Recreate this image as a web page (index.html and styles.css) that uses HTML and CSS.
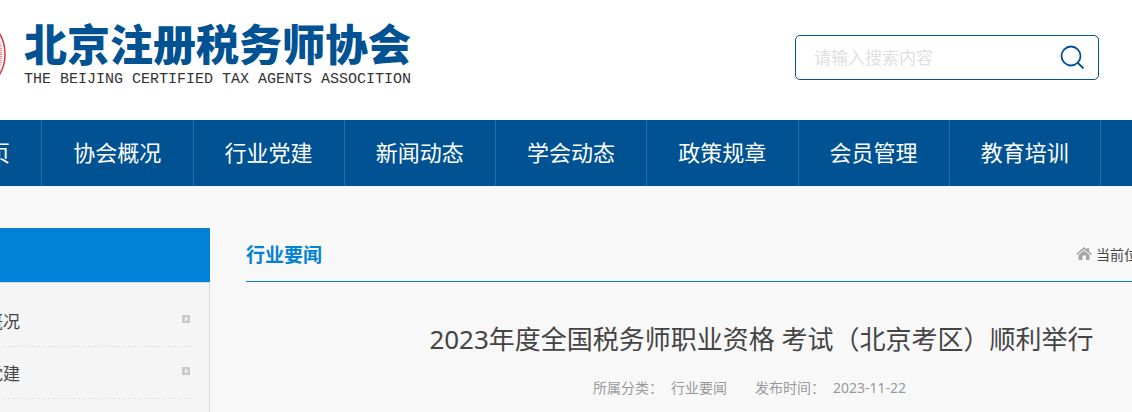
FILE: index.html
```html
<!DOCTYPE html>
<html lang="zh-CN">
<head>
  <meta charset="UTF-8" />
  <title>北京注册税务师协会</title>
  <link rel="stylesheet" href="styles.css">
</head>
<body>
  <header class="header">
    <a class="logo" href="#">
      <svg class="seal" width="84" height="84" viewBox="0 0 84 84" fill="none" stroke="#e0303a">
        <circle cx="42" cy="42" r="41" stroke-width="1.5" />
        <circle cx="42" cy="42" r="36" stroke-width="5" stroke-dasharray="1 1" opacity=".6" />
        <circle cx="42" cy="42" r="30" />
      </svg>
      <span class="logo-text">
        <span class="logo-cn">北京注册税务师协会</span>
        <span class="logo-en">THE BEIJING CERTIFIED TAX AGENTS ASSOCITION</span>
      </span>
    </a>
    <form class="search">
      <input type="text" placeholder="请输入搜索内容" aria-label="搜索">
      <button type="button" aria-label="搜索">
        <svg width="26" height="26" viewBox="0 0 26 26" fill="none" stroke="#005293" stroke-width="1.8">
          <circle cx="12" cy="12" r="9.5" />
          <path d="M18.500 18.500l6 6" />
        </svg>
      </button>
    </form>
  </header>

  <nav>
    <ul>
      <li><a href="#">网站首页</a></li>
      <li><a href="#">协会概况</a></li>
      <li><a href="#">行业党建</a></li>
      <li><a href="#">新闻动态</a></li>
      <li><a href="#">学会动态</a></li>
      <li><a href="#">政策规章</a></li>
      <li><a href="#">会员管理</a></li>
      <li><a href="#">教育培训</a></li>
    </ul>
  </nav>

  <div class="content">
    <aside class="sidebar">
      <div class="sidebar-head"></div>
      <ul>
        <li>
          <a href="#">协会概况</a>
          <svg width="8" height="8" viewBox="0 0 8 8"><path fill="#c9c9c9" d="M0 0h8v8H0z" /><path fill="#f5f5f5" d="M3 2h1l2 2-2 2H3z" /></svg>
        </li>
        <li>
          <a href="#">行业党建</a>
          <svg width="8" height="8" viewBox="0 0 8 8"><path fill="#c9c9c9" d="M0 0h8v8H0z" /><path fill="#f5f5f5" d="M3 2h1l2 2-2 2H3z" /></svg>
        </li>
      </ul>
    </aside>

    <main>
      <div class="main-head">
        <h2>行业要闻</h2>
        <div class="crumb">
          <svg width="16" height="14" viewBox="0 0 16 14" fill="#a5a5a5">
            <path d="M8 0l3 2.500V1h2v3.300L16 7l-1 1-7-5.800L1 8 0 7z" />
            <path d="M8 3.500l5.500 4.500V13H10V8.500H6.500V13H2.500V8z" />
          </svg>
          <span>当前位置：首页 &gt; 行业要闻</span>
        </div>
      </div>
      <article>
        <h1>2023年度全国税务师职业资格 考试（北京考区）顺利举行</h1>
        <div class="meta">
          <div><span>所属分类：</span><span>行业要闻</span></div>
          <div><span>发布时间：</span><span>2023-11-22</span></div>
        </div>
      </article>
    </main>
  </div>
</body>
</html>
```

FILE: styles.css
```css
* {
  box-sizing: border-box;
}

body {
  margin: 0;
  background: #f8f8f8;
  color: #444;
  font-family: "Noto Sans", "Noto Sans CJK SC", sans-serif;
  overflow: hidden;
}

a {
  color: inherit;
  text-decoration: none;
}

ul {
  list-style: none;
  margin: 0;
  padding: 0;
}

.header {
  display: flex;
  justify-content: space-between;
  align-items: center;
  height: 120px;
  padding-right: 33px;
  background: #fff;
}

.logo {
  display: flex;
  align-items: center;
  gap: 18px;
  margin-left: -78px;
  padding-bottom: 12px;
}

.seal {
  flex: none;
}

.logo-text {
  display: flex;
  flex-direction: column;
  gap: 4px;
}

.logo-cn {
  color: #005293;
  font-family: "Noto Sans CJK SC", sans-serif;
  font-size: 43px;
  font-weight: 900;
  line-height: 48px;
}

.logo-en {
  color: #333;
  font-family: "Liberation Mono", monospace;
  font-size: 15px;
  line-height: 20px;
}

.search {
  display: flex;
  align-items: center;
  width: 304px;
  height: 45px;
  margin-bottom: 6px;
  padding: 0 13px 0 18px;
  border: 1px solid #005293;
  border-radius: 5px;
}

.search input {
  flex: 1;
  min-width: 0;
  padding: 0;
  border: none;
  outline: none;
  background: none;
  font-family: inherit;
  font-size: 17px;
}

.search input::placeholder {
  color: #e0e0e0;
}

.search button {
  display: flex;
  padding: 0;
  border: none;
  background: none;
  cursor: pointer;
}

nav {
  background: #005293;
}

nav ul {
  display: grid;
  grid-template-columns: repeat(8, 1fr);
  margin: 0 31px 0 -109px;
}

nav a {
  display: block;
  padding-bottom: 2px;
  border-right: 1px solid #2a6da4;
  color: #fff;
  font-size: 22px;
  line-height: 64px;
  text-align: center;
}

/* content runs wider than the header on both sides */
.content {
  display: flex;
  gap: 36px;
  margin: 42px -145px 0 -109px;
}

.sidebar {
  flex: none;
  width: 319px;
}

.sidebar-head {
  height: 54px;
  background: #0282d6;
}

.sidebar ul {
  padding: 12px 18px 30px 60px;
  border: 1px solid #d9d9d9;
  background: #f5f5f5;
}

.sidebar li {
  display: flex;
  justify-content: space-between;
  align-items: center;
  height: 52px;
  padding-right: 1px;
  border-bottom: 1px dashed #e3e3e3;
  font-size: 17px;
}

.sidebar svg {
  margin-bottom: 4px;
}

main {
  flex: 1;
}

.main-head {
  display: flex;
  justify-content: space-between;
  align-items: center;
  height: 54px;
  padding-bottom: 2px;
  border-bottom: 1px solid #0282d6;
}

.main-head h2 {
  margin: 0;
  color: #0282d6;
  font-size: 19px;
}

.crumb {
  display: flex;
  align-items: center;
  gap: 4px;
  width: 201px;
  font-size: 14px;
  white-space: nowrap;
}

article {
  padding-top: 36px;
  text-align: center;
}

article h1 {
  margin: 0;
  font-size: 26px;
  font-weight: normal;
  line-height: 42px;
}

.meta {
  display: flex;
  justify-content: center;
  gap: 28px;
  margin-top: 18px;
  padding-right: 24px;
  color: #999;
  font-size: 14px;
  line-height: 20px;
}

.meta div {
  display: flex;
  gap: 8px;
}
```
